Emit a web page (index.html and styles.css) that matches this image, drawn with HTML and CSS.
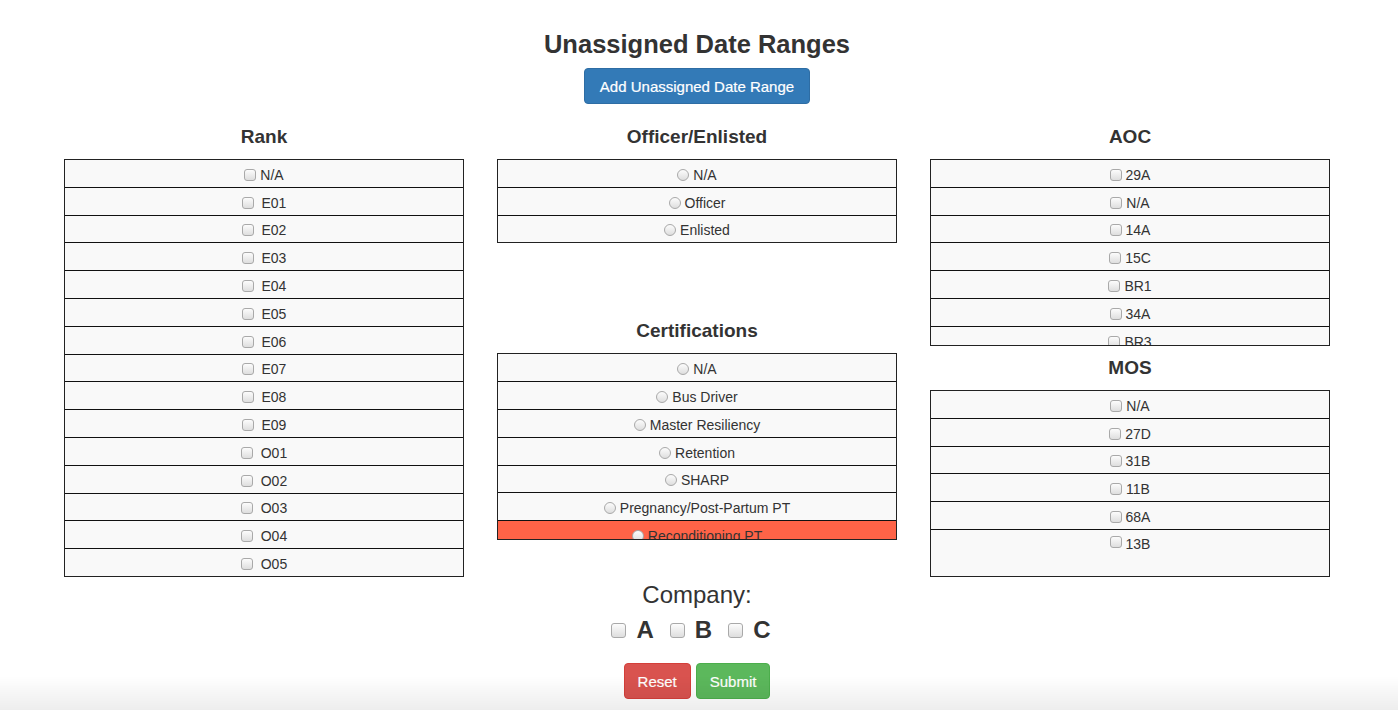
FILE: index.html
```html
<!DOCTYPE html>
<html>
<head>
<meta charset="utf-8">
<link rel="stylesheet" href="styles.css">
</head>
<body>
<div class="page">
  <h1 class="title">Unassigned Date Ranges</h1>
  <div class="center"><button class="btn btn-primary">Add Unassigned Date Range</button></div>
  <div class="columns">
    <div class="col">
      <h2 class="heading">Rank</h2>
      <div class="list">
        <div class="row"><input type="checkbox" class="cb">N/A</div>
        <div class="row"><input type="checkbox" class="cb"> E01</div>
        <div class="row"><input type="checkbox" class="cb"> E02</div>
        <div class="row"><input type="checkbox" class="cb"> E03</div>
        <div class="row"><input type="checkbox" class="cb"> E04</div>
        <div class="row"><input type="checkbox" class="cb"> E05</div>
        <div class="row"><input type="checkbox" class="cb"> E06</div>
        <div class="row"><input type="checkbox" class="cb"> E07</div>
        <div class="row"><input type="checkbox" class="cb"> E08</div>
        <div class="row"><input type="checkbox" class="cb"> E09</div>
        <div class="row"><input type="checkbox" class="cb"> O01</div>
        <div class="row"><input type="checkbox" class="cb"> O02</div>
        <div class="row"><input type="checkbox" class="cb"> O03</div>
        <div class="row"><input type="checkbox" class="cb"> O04</div>
        <div class="row"><input type="checkbox" class="cb"> O05</div>
      </div>
    </div>
    <div class="col">
      <h2 class="heading">Officer/Enlisted</h2>
      <div class="list">
        <div class="row"><input type="radio" name="oe" class="rd">N/A</div>
        <div class="row"><input type="radio" name="oe" class="rd">Officer</div>
        <div class="row"><input type="radio" name="oe" class="rd">Enlisted</div>
      </div>
      <h2 class="heading heading-cert">Certifications</h2>
      <div class="list list-scroll">
        <div class="row"><input type="radio" name="ce" class="rd">N/A</div>
        <div class="row"><input type="radio" name="ce" class="rd">Bus Driver</div>
        <div class="row"><input type="radio" name="ce" class="rd">Master Resiliency</div>
        <div class="row"><input type="radio" name="ce" class="rd">Retention</div>
        <div class="row"><input type="radio" name="ce" class="rd">SHARP</div>
        <div class="row"><input type="radio" name="ce" class="rd">Pregnancy/Post-Partum PT</div>
        <div class="row row-hot"><input type="radio" name="ce" class="rd">Reconditioning PT</div>
      </div>
    </div>
    <div class="col">
      <h2 class="heading">AOC</h2>
      <div class="list list-scroll">
        <div class="row"><input type="checkbox" class="cb">29A</div>
        <div class="row"><input type="checkbox" class="cb">N/A</div>
        <div class="row"><input type="checkbox" class="cb">14A</div>
        <div class="row"><input type="checkbox" class="cb">15C</div>
        <div class="row"><input type="checkbox" class="cb">BR1</div>
        <div class="row"><input type="checkbox" class="cb">34A</div>
        <div class="row"><input type="checkbox" class="cb">BR3</div>
      </div>
      <h2 class="heading">MOS</h2>
      <div class="list list-scroll">
        <div class="row"><input type="checkbox" class="cb">N/A</div>
        <div class="row"><input type="checkbox" class="cb">27D</div>
        <div class="row"><input type="checkbox" class="cb">31B</div>
        <div class="row"><input type="checkbox" class="cb">11B</div>
        <div class="row"><input type="checkbox" class="cb">68A</div>
        <div class="row row-last"><input type="checkbox" class="cb">13B</div>
      </div>
    </div>
  </div>
  <div class="company">
    <div class="company-label">Company:</div>
    <div class="company-opts">
      <label class="opt"><input type="checkbox" class="cb-lg">A</label>
      <label class="opt"><input type="checkbox" class="cb-lg">B</label>
      <label class="opt"><input type="checkbox" class="cb-lg">C</label>
    </div>
    <div class="actions">
      <button class="btn btn-danger">Reset</button>
      <button class="btn btn-success">Submit</button>
    </div>
  </div>
</div>
</body>
</html>
```

FILE: styles.css
```css
html, body {
  margin: 0;
  padding: 0;
  background: #fff;
}
body {
  font-family: "Liberation Sans", Arial, sans-serif;
  color: #333;
  font-size: 14px;
}
body::after {
  content: "";
  position: fixed;
  left: 0;
  right: 0;
  bottom: 0;
  height: 34px;
  background: linear-gradient(to bottom, rgba(0,0,0,0), rgba(0,0,0,0.07));
  pointer-events: none;
}
.page {
  width: 1266px;
  margin-left: 64px;
  padding-top: 31px;
}
.title {
  margin: 0;
  font-size: 25.5px;
  line-height: 26px;
  font-weight: bold;
  text-align: center;
  color: #333;
}
.center {
  text-align: center;
  margin-top: 11px;
}
.btn {
  font-family: "Liberation Sans", Arial, sans-serif;
  font-size: 15px;
  line-height: 21px;
  padding: 7px 13px 6px;
  border: 1px solid transparent;
  border-radius: 4px;
  color: #fff;
  cursor: pointer;
  -webkit-text-stroke: 0.2px #fff;
}
.btn-primary {
  background: #337ab7;
  border-color: #2e6da4;
  padding: 7px 15px 6px;
}
.btn-danger {
  background: #d9534f;
  border-color: #d43f3a;
}
.btn-success {
  background: #5cb85c;
  border-color: #4cae4c;
}
.columns {
  display: grid;
  grid-template-columns: 400px 400px 400px;
  column-gap: 33px;
  margin-top: 11px;
}
.col {
  display: flex;
  flex-direction: column;
}
.heading {
  margin: 11px 0;
  font-size: 19px;
  line-height: 22px;
  font-weight: bold;
  text-align: center;
  color: #333;
}
.heading-cert {
  margin-top: 77px;
}
.list {
  border: 1px solid #222;
  background: #f9f9f9;
}
.list-scroll {
  height: 185px;
  overflow: hidden;
}
.row {
  height: 27.8px;
  box-sizing: border-box;
  border-top: 1px solid #111;
  padding-top: 3px;
  display: flex;
  align-items: center;
  justify-content: center;
  font-size: 14px;
  color: #333;
  white-space: pre;
}
.row:first-child {
  border-top: none;
  height: 26.8px;
}
.row-hot {
  background: #ff6347;
}
.row-last {
  height: 46px;
  align-items: flex-start;
  padding-top: 6px;
}
.cb, .rd, .cb-lg {
  appearance: none;
  -webkit-appearance: none;
  margin: 0 4px 0 0;
  box-sizing: border-box;
  border: 1px solid #a9a9a9;
  background: linear-gradient(to bottom, #fcfcfc, #dedede);
}
.cb {
  width: 12px;
  height: 12px;
  border-radius: 3px;
}
.rd {
  width: 12px;
  height: 12px;
  border-radius: 50%;
}
.company {
  margin-top: 5px;
  text-align: center;
}
.company-label {
  font-size: 24px;
  line-height: 26px;
  color: #333;
}
.company-opts {
  display: flex;
  justify-content: center;
  gap: 16px;
  margin-top: 8px;
  padding-right: 12px;
}
.opt {
  display: flex;
  align-items: center;
  font-size: 24px;
  font-weight: bold;
  line-height: 28px;
  color: #333;
}
.cb-lg {
  width: 15px;
  height: 15px;
  border-radius: 3px;
  margin-right: 10px;
}
.actions {
  display: flex;
  justify-content: center;
  gap: 5px;
  margin-top: 19px;
}
```
